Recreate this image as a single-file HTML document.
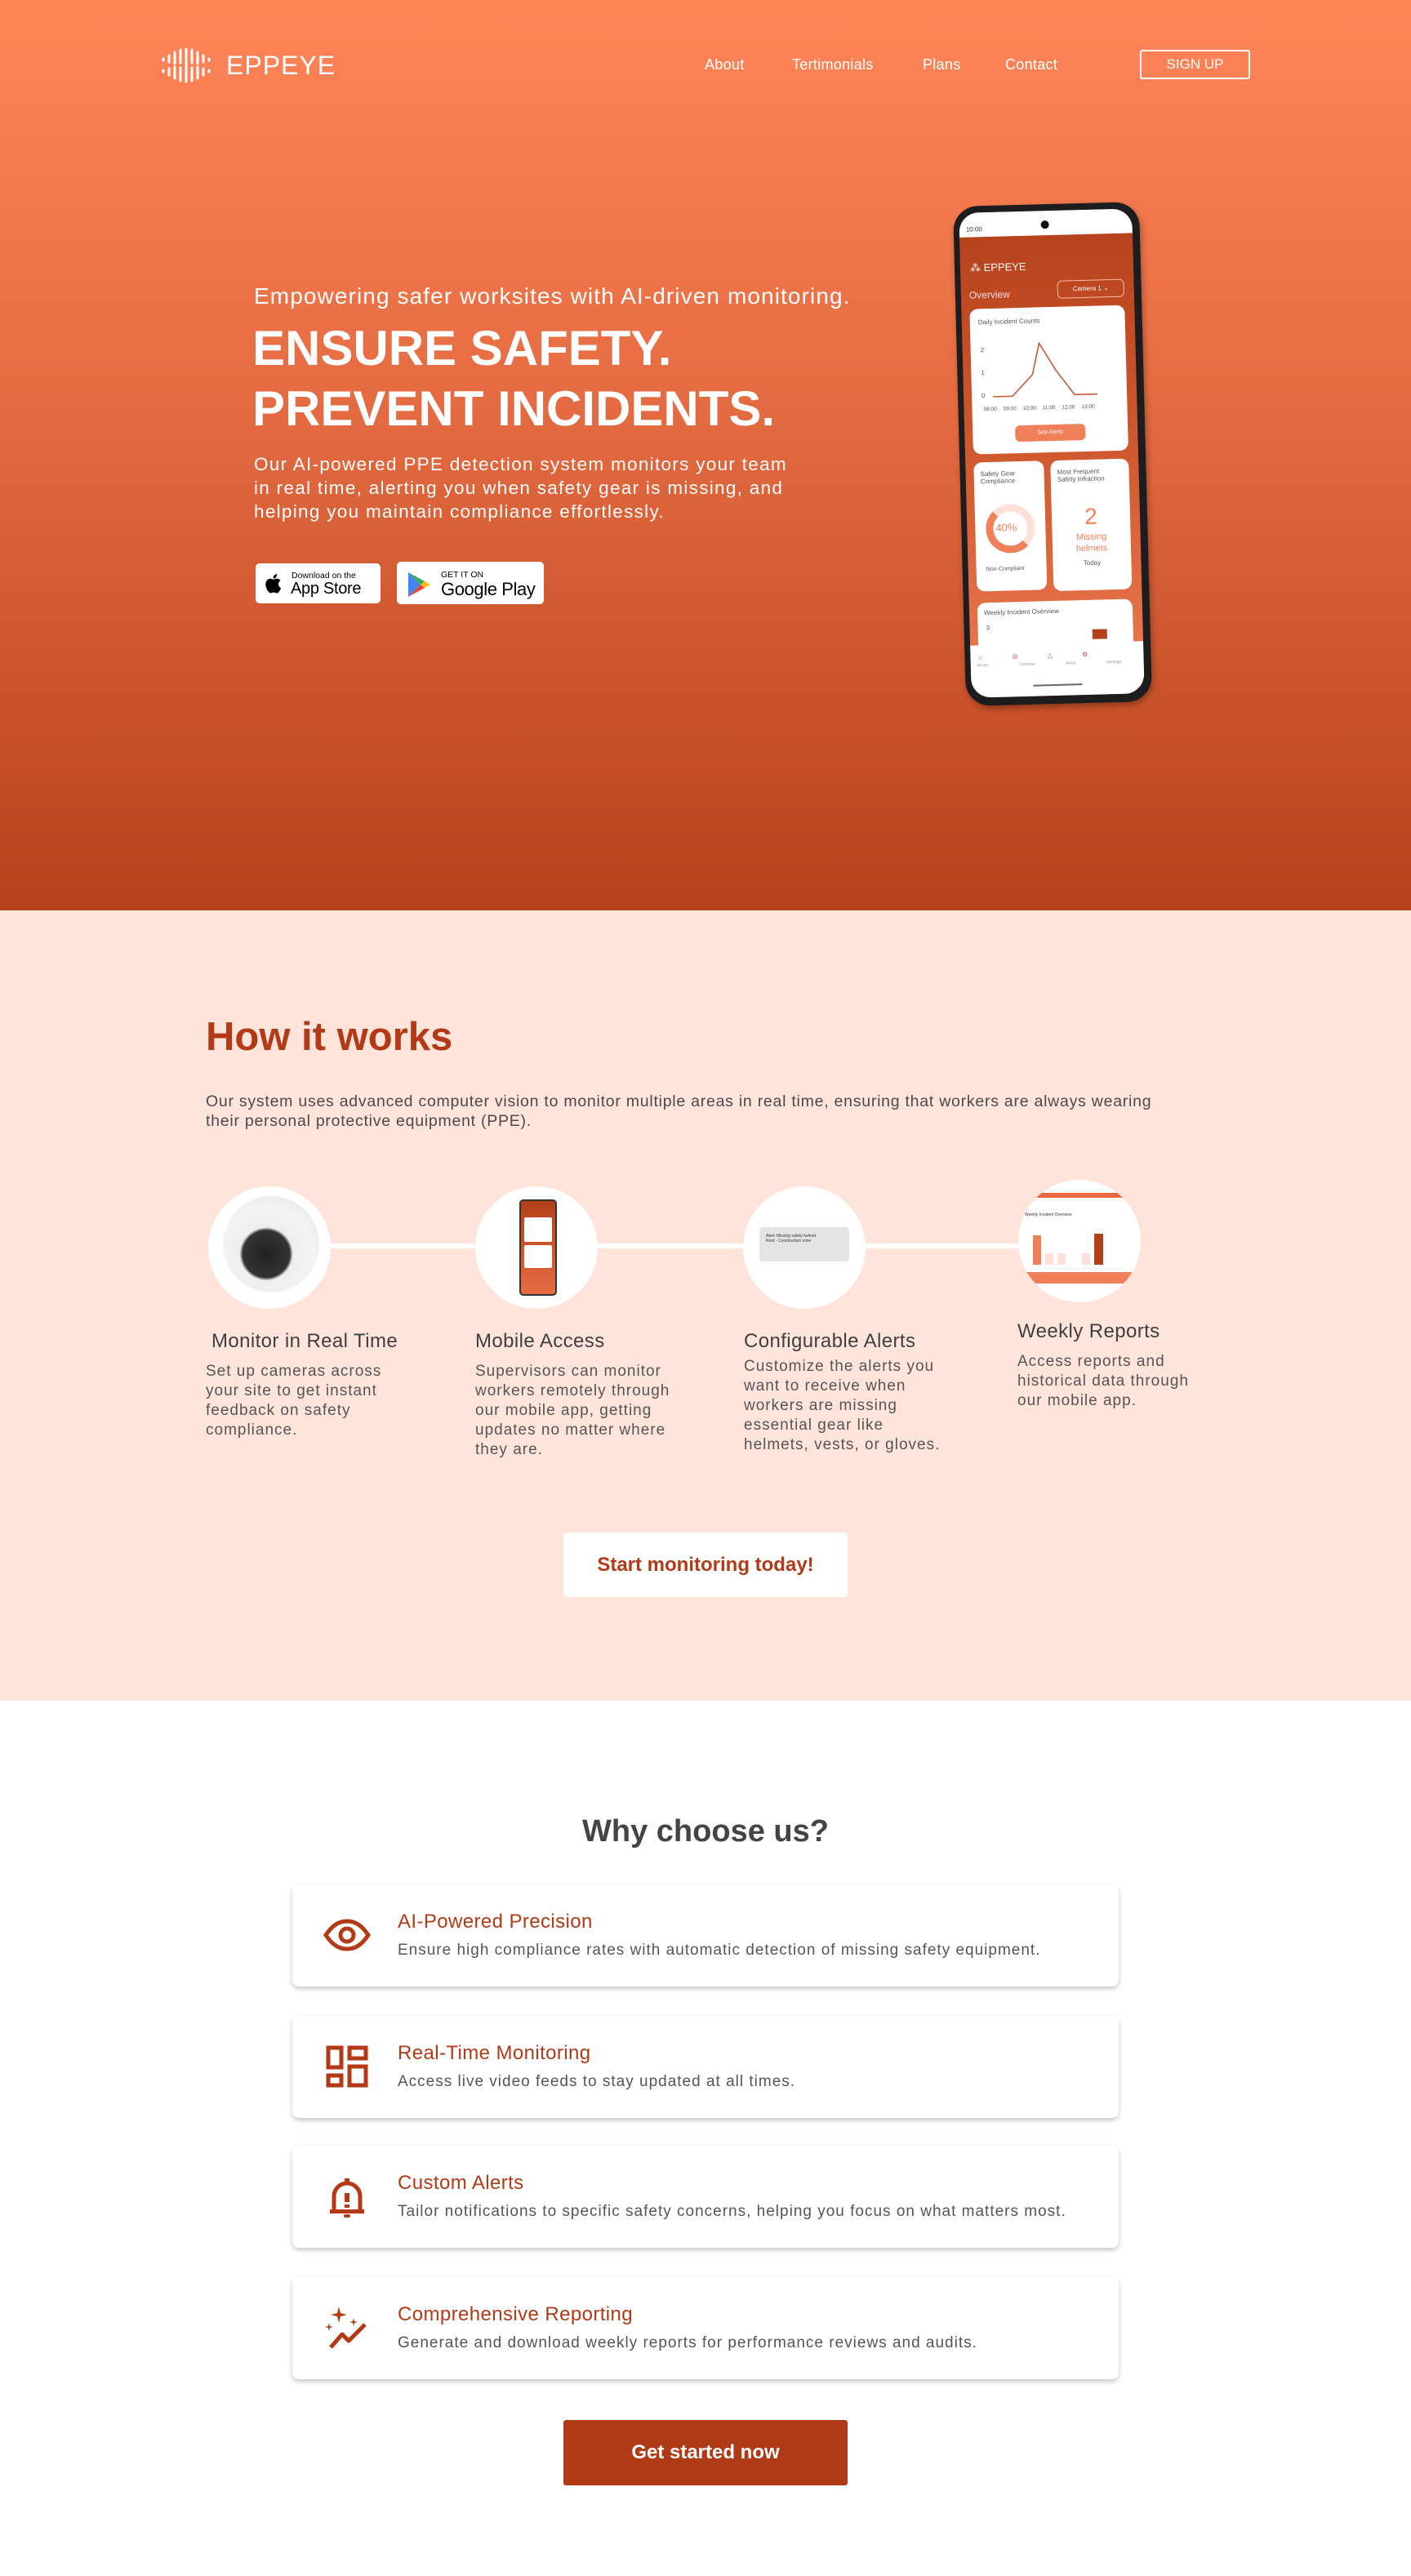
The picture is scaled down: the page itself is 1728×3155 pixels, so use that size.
<!DOCTYPE html>
<html><head><meta charset="utf-8"><style>
*{margin:0;padding:0;box-sizing:border-box}
body{width:1728px;height:3155px;position:relative;font-family:"Liberation Sans",sans-serif;background:#fff;overflow:hidden}
.a{position:absolute}
#hero{left:0;top:0;width:1728px;height:1115px;background:linear-gradient(180deg,#FF8659 0%,#E46B41 45%,#B6411A 100%)}
.nav{color:#fff;font-size:18px;top:69px;letter-spacing:.3px}
#pink{left:0;top:1115px;width:1728px;height:968px;background:#FFE4DC}
.circ{width:150px;height:150px;border-radius:50%;background:#fff;overflow:hidden}
.st{font-size:24px;color:#3f3f3f;letter-spacing:.4px}
.sd{font-size:19px;color:#555;line-height:24px;letter-spacing:1px}
.card{left:358px;width:1012px;height:125px;background:#fff;border-radius:8px;box-shadow:0 3px 6px rgba(0,0,0,.22)}
.ct{position:absolute;left:129px;top:32px;font-size:24px;color:#B33A17;letter-spacing:.4px}
.cd{position:absolute;left:129px;top:70px;font-size:19px;color:#555;letter-spacing:1px}
.ic{position:absolute;left:37px;top:32px;width:60px;height:60px}
.pc{position:absolute;background:#fff;border-radius:10px}
.ps{font-size:8px;color:#555}
</style></head><body>
<div id="hero" class="a">
 <svg class="a" style="left:197px;top:58px" width="62" height="44" viewBox="0 0 62 44">
  <g stroke="#fff" stroke-width="3" stroke-linecap="round">
   <line x1="3" y1="14" x2="3" y2="16"/><line x1="3" y1="28" x2="3" y2="30"/>
   <line x1="10" y1="10" x2="10" y2="18"/><line x1="10" y1="26" x2="10" y2="34"/>
   <line x1="17" y1="6" x2="17" y2="20"/><line x1="17" y1="24" x2="17" y2="38"/>
   <line x1="24" y1="3" x2="24" y2="19"/><line x1="24" y1="25" x2="24" y2="41"/>
   <line x1="31" y1="2" x2="31" y2="42"/>
   <line x1="38" y1="3" x2="38" y2="19"/><line x1="38" y1="25" x2="38" y2="41"/>
   <line x1="45" y1="6" x2="45" y2="20"/><line x1="45" y1="24" x2="45" y2="38"/>
   <line x1="52" y1="10" x2="52" y2="18"/><line x1="52" y1="26" x2="52" y2="34"/>
   <line x1="59" y1="14" x2="59" y2="16"/><line x1="59" y1="28" x2="59" y2="30"/>
  </g></svg>
 <div class="a" style="left:277px;top:62px;font-size:32px;color:#fff;letter-spacing:1px">EPPEYE</div>
 <div class="a nav" style="left:863px">About</div>
 <div class="a nav" style="left:970px">Tertimonials</div>
 <div class="a nav" style="left:1130px">Plans</div>
 <div class="a nav" style="left:1231px">Contact</div>
 <div class="a" style="left:1396px;top:61px;width:135px;height:36px;border:2px solid #fff;border-radius:3px;color:#fff;font-size:17px;text-align:center;line-height:32px">SIGN UP</div>
 <div class="a" style="left:311px;top:347px;font-size:28px;color:#fff;letter-spacing:1.1px">Empowering safer worksites with AI-driven monitoring.</div>
 <div class="a" style="left:309px;top:390px;font-size:60px;font-weight:bold;color:#fff;line-height:74px">ENSURE SAFETY.<br>PREVENT INCIDENTS.</div>
 <div class="a" style="left:311px;top:554px;font-size:22.5px;color:#fff;line-height:29px;letter-spacing:1.3px">Our AI-powered PPE detection system monitors your team<br>in real time, alerting you when safety gear is missing, and<br>helping you maintain compliance effortlessly.</div>
 <div class="a" style="left:313px;top:690px;width:153px;height:49px;background:#fff;border-radius:5px">
  <svg class="a" style="left:10px;top:11px" width="22" height="27" viewBox="0 0 22 27"><path d="M18 14.5c0-3 2.4-4.4 2.5-4.5-1.4-2-3.5-2.3-4.2-2.3-1.8-.2-3.5 1-4.4 1-.9 0-2.3-1-3.8-1-2 0-3.8 1.2-4.8 2.9-2.1 3.6-.5 8.9 1.5 11.8 1 1.4 2.1 3 3.6 3 1.5-.1 2-.9 3.8-.9 1.8 0 2.3.9 3.8.9 1.6 0 2.6-1.4 3.5-2.9 1.1-1.6 1.6-3.2 1.6-3.3 0 0-3.1-1.2-3.1-4.7zM15.1 5.8c.8-1 1.4-2.4 1.2-3.8-1.2.1-2.6.8-3.5 1.8-.8.9-1.4 2.3-1.2 3.7 1.3.1 2.7-.7 3.5-1.7z" fill="#000"/></svg>
  <div class="a" style="left:44px;top:9px;font-size:10.5px;color:#000">Download on the</div>
  <div class="a" style="left:43px;top:20px;font-size:20px;color:#000;letter-spacing:-.3px">App Store</div>
 </div>
 <div class="a" style="left:486px;top:688px;width:180px;height:52px;background:#fff;border-radius:5px">
  <svg class="a" style="left:12px;top:12px" width="32" height="32" viewBox="0 0 32 32"><path d="M2 1L17 16 2 31Z" fill="#4285F4"/><path d="M2 1L22 12 17 16Z" fill="#34A853"/><path d="M2 31L22 20 17 16Z" fill="#EA4335"/><path d="M22 12L29 16 22 20 17 16Z" fill="#FBBC04"/></svg>
  <div class="a" style="left:54px;top:10px;font-size:10.5px;color:#000">GET IT ON</div>
  <div class="a" style="left:54px;top:21px;font-size:22px;color:#000;letter-spacing:-.4px">Google Play</div>
 </div>
 <!-- phone -->
 <div class="a" style="left:1175px;top:250px;width:228px;height:612px;background:#1d1d1f;border-radius:30px;transform:rotate(-1.5deg);box-shadow:2px 4px 8px rgba(0,0,0,.3)">
  <div class="a" style="left:7px;top:8px;width:212px;height:594px;border-radius:24px;overflow:hidden;background:linear-gradient(180deg,#B4401A 0%,#D0592F 50%,#EE7B52 100%)">
   <div class="a" style="left:0;top:0;width:212px;height:30px;background:#fff"></div>
   <div class="a" style="left:8px;top:16px;font-size:8px;color:#333">10:00</div>
   <div class="a" style="left:100px;top:12px;width:10px;height:10px;border-radius:50%;background:#111"></div>
   <div class="a" style="left:12px;top:60px;font-size:13px;color:#fff">⁂ EPPEYE</div>
   <div class="a" style="left:10px;top:94px;font-size:12px;color:#fde">Overview</div>
   <div class="a" style="left:118px;top:86px;width:82px;height:22px;border:1px solid #f5c0ac;border-radius:6px;font-size:8px;color:#fff;text-align:center;line-height:20px">Camera 1 ⌄</div>
   <div class="pc" style="left:10px;top:118px;width:190px;height:178px">
    <div class="a ps" style="left:10px;top:12px;font-size:8px">Daily Incident Counts</div>
    <div class="a ps" style="left:12px;top:44px;line-height:14px">2<br><br>1<br><br>0</div>
    <svg class="a" style="left:20px;top:36px" width="160" height="80"><polyline points="6,72 30,72 55,46 64,8 84,42 106,72 134,72" fill="none" stroke="#C55A35" stroke-width="1.6"/></svg>
    <div class="a" style="left:14px;top:120px;font-size:6.5px;color:#555;word-spacing:6px">08:00 09:00 10:00 11:00 12:00 13:00</div>
    <div class="a" style="left:52px;top:144px;width:86px;height:20px;background:#F0805A;border-radius:6px;color:#fff;font-size:7px;text-align:center;line-height:20px">See Alerts</div>
   </div>
   <div class="pc" style="left:10px;top:306px;width:86px;height:158px">
    <div class="a ps" style="left:8px;top:10px">Safety Gear<br>Compliance</div>
    <div class="a" style="left:13px;top:52px;width:60px;height:60px;border-radius:50%;border:9px solid #fde0d6;border-bottom-color:#F0805A;border-left-color:#F0805A"></div>
    <div class="a" style="left:25px;top:73px;font-size:13px;color:#F0805A">40%</div>
    <div class="a ps" style="left:12px;top:128px;font-size:7px">Non-Compliant</div>
   </div>
   <div class="pc" style="left:104px;top:306px;width:96px;height:160px">
    <div class="a ps" style="left:8px;top:10px">Most Frequent<br>Safety Infraction</div>
    <div class="a" style="left:0;top:54px;width:96px;text-align:center;color:#F0805A;font-size:28px">2</div>
    <div class="a" style="left:0;top:88px;width:96px;text-align:center;color:#F0805A;font-size:11px;line-height:14px">Missing<br>helmets</div>
    <div class="a ps" style="left:0;top:122px;width:96px;text-align:center">Today</div>
   </div>
   <div class="pc" style="left:10px;top:478px;width:190px;height:100px">
    <div class="a ps" style="left:8px;top:8px">Weekly Incident Overview</div>
    <div class="a ps" style="left:10px;top:26px">3</div>
    <div class="a" style="left:140px;top:36px;width:18px;height:12px;background:#B4401A"></div>
   </div>
   <div class="a" style="left:0;top:530px;width:212px;height:64px;background:#fff"></div>
   <div class="a" style="left:10px;top:540px;font-size:8px;color:#c44;word-spacing:34px">⌂ ◎ △ ⚙</div>
   <div class="a" style="left:8px;top:552px;font-size:5px;color:#999;word-spacing:36px">Home Cameras Alerts Settings</div>
   <div class="a" style="left:76px;top:580px;width:60px;height:2px;background:#666"></div>
  </div>
 </div>
</div>

<div id="pink" class="a">
 <div class="a" style="left:252px;top:127px;font-size:49px;font-weight:bold;color:#B33A17">How it works</div>
 <div class="a" style="left:252px;top:222px;font-size:19.5px;color:#4a4a4a;line-height:24px;letter-spacing:.75px">Our system uses advanced computer vision to monitor multiple areas in real time, ensuring that workers are always wearing<br>their personal protective equipment (PPE).</div>
 <div class="a" style="left:330px;top:408px;width:990px;height:6px;background:#fff"></div>
 <div class="a circ" style="left:255px;top:338px">
  <div class="a" style="left:18px;top:12px;width:118px;height:118px;border-radius:50%;background:radial-gradient(circle at 45% 60%,#222 0,#333 30%,#eee 34%,#f4f4f4 60%,#ddd 100%)"></div>
 </div>
 <div class="a circ" style="left:582px;top:338px">
  <div class="a" style="left:54px;top:16px;width:46px;height:118px;border-radius:5px;background:linear-gradient(#B4401A,#E56B41);border:2px solid #333"></div>
  <div class="a" style="left:60px;top:38px;width:34px;height:30px;background:#fff;border-radius:2px"></div>
  <div class="a" style="left:60px;top:72px;width:34px;height:28px;background:#fff;border-radius:2px"></div>
 </div>
 <div class="a circ" style="left:910px;top:338px">
  <div class="a" style="left:20px;top:50px;width:110px;height:42px;background:#e4e4e4;border-radius:4px;font-size:5px;color:#333;padding:8px">Alert: Missing safety helmet<br>Roof · Construction zone</div>
 </div>
 <div class="a circ" style="left:1247px;top:330px">
  <div class="a" style="left:0;top:16px;width:150px;height:6px;background:#E8683F"></div>
  <div class="a" style="left:8px;top:40px;font-size:5px;color:#333">Weekly Incident Overview</div>
  <div class="a" style="left:18px;top:68px;width:10px;height:36px;background:#F0805A"></div>
  <div class="a" style="left:33px;top:90px;width:10px;height:14px;background:#fde0d6"></div>
  <div class="a" style="left:48px;top:90px;width:10px;height:14px;background:#fde0d6"></div>
  <div class="a" style="left:78px;top:90px;width:10px;height:14px;background:#fde0d6"></div>
  <div class="a" style="left:93px;top:66px;width:11px;height:38px;background:#B4401A"></div>
  <div class="a" style="left:0;top:113px;width:150px;height:14px;background:#F0805A"></div>
 </div>
 <div class="a st" style="left:259px;top:514px">Monitor in Real Time</div>
 <div class="a sd" style="left:252px;top:553px">Set up cameras across<br>your site to get instant<br>feedback on safety<br>compliance.</div>
 <div class="a st" style="left:582px;top:514px">Mobile Access</div>
 <div class="a sd" style="left:582px;top:553px">Supervisors can monitor<br>workers remotely through<br>our mobile app, getting<br>updates no matter where<br>they are.</div>
 <div class="a st" style="left:911px;top:514px">Configurable Alerts</div>
 <div class="a sd" style="left:911px;top:547px">Customize the alerts you<br>want to receive when<br>workers are missing<br>essential gear like<br>helmets, vests, or gloves.</div>
 <div class="a st" style="left:1246px;top:502px">Weekly Reports</div>
 <div class="a sd" style="left:1246px;top:541px">Access reports and<br>historical data through<br>our mobile app.</div>
 <div class="a" style="left:690px;top:762px;width:348px;height:79px;background:#fff;border-radius:3px;color:#B33A17;font-weight:bold;font-size:24px;text-align:center;line-height:79px">Start monitoring today!</div>
</div>

<div class="a" style="left:0;top:2222px;width:1728px;text-align:center;font-size:38px;font-weight:bold;color:#444">Why choose us?</div>
<div class="a card" style="top:2308px">
 <svg class="ic" viewBox="0 0 60 60"><path d="M4 30C12 18 20 13 30 13S48 18 56 30C48 42 40 47 30 47S12 42 4 30Z" fill="none" stroke="#B33A17" stroke-width="5"/><circle cx="30" cy="30" r="8" fill="none" stroke="#B33A17" stroke-width="5"/></svg>
 <div class="ct">AI-Powered Precision</div><div class="cd">Ensure high compliance rates with automatic detection of missing safety equipment.</div></div>
<div class="a card" style="top:2469px">
 <svg class="ic" viewBox="0 0 60 60"><g fill="none" stroke="#B33A17" stroke-width="5"><rect x="7" y="7" width="16" height="24"/><rect x="33" y="7" width="20" height="13"/><rect x="7" y="41" width="16" height="12"/><rect x="33" y="30" width="20" height="23"/></g></svg>
 <div class="ct">Real-Time Monitoring</div><div class="cd">Access live video feeds to stay updated at all times.</div></div>
<div class="a card" style="top:2628px">
 <svg class="ic" viewBox="0 0 60 60"><path d="M14 48V30a16 16 0 0 1 32 0v18" fill="none" stroke="#B33A17" stroke-width="5"/><rect x="9" y="46" width="42" height="5" fill="#B33A17"/><rect x="27" y="8" width="6" height="8" fill="#B33A17"/><rect x="27" y="26" width="6" height="11" fill="#B33A17"/><rect x="27" y="40" width="6" height="4" fill="#B33A17"/><rect x="26" y="52" width="8" height="4" rx="2" fill="#B33A17"/></svg>
 <div class="ct">Custom Alerts</div><div class="cd">Tailor notifications to specific safety concerns, helping you focus on what matters most.</div></div>
<div class="a card" style="top:2789px">
 <svg class="ic" viewBox="0 0 60 60"><path d="M10 54L24 38 32 46 52 26" fill="none" stroke="#B33A17" stroke-width="5" stroke-linejoin="round"/><path d="M20 4L22 12 30 14 22 16 20 24 18 16 10 14 18 12Z M8 24L9 28 13 29 9 30 8 34 7 30 3 29 7 28Z M38 18L39 22 43 23 39 24 38 28 37 24 33 23 37 22Z" fill="#B33A17"/></svg>
 <div class="ct">Comprehensive Reporting</div><div class="cd">Generate and download weekly reports for performance reviews and audits.</div></div>
<div class="a" style="left:690px;top:2964px;width:348px;height:80px;background:#B03A15;border-radius:3px;color:#fff;font-weight:bold;font-size:24px;text-align:center;line-height:80px">Get started now</div>
</body></html>
